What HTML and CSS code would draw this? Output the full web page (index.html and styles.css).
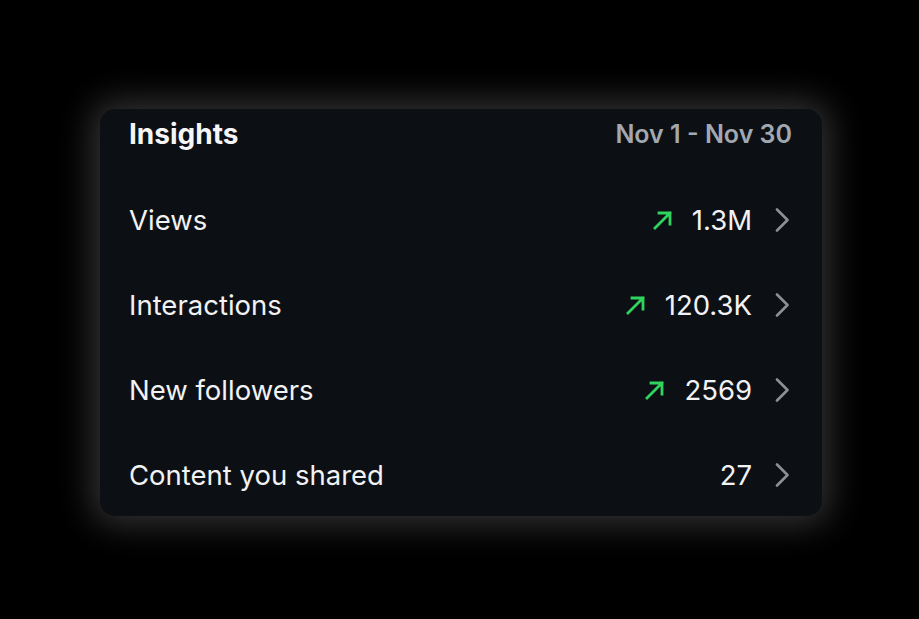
FILE: index.html
```
<!DOCTYPE html>
<html>
<head>
<meta charset="utf-8">
<link rel="stylesheet" href="styles.css">
</head>
<body>
<div class="card">
  <div class="header">
    <span class="title">Insights</span>
    <span class="date">Nov 1 - Nov 30</span>
  </div>
  <div class="row">
    <span class="label">Views</span>
    <span class="right">
      <svg class="arrow" viewBox="0 0 20 20"><path d="M2 18 L17 3 M6 3 H17 V14"/></svg>
      <span class="value">1.3M</span>
      <svg class="chev" viewBox="0 0 14 24"><path d="M2 1.5 L12.5 12 L2 22.5"/></svg>
    </span>
  </div>
  <div class="row">
    <span class="label">Interactions</span>
    <span class="right">
      <svg class="arrow" viewBox="0 0 20 20"><path d="M2 18 L17 3 M6 3 H17 V14"/></svg>
      <span class="value">120.3K</span>
      <svg class="chev" viewBox="0 0 14 24"><path d="M2 1.5 L12.5 12 L2 22.5"/></svg>
    </span>
  </div>
  <div class="row">
    <span class="label">New followers</span>
    <span class="right">
      <svg class="arrow" viewBox="0 0 20 20"><path d="M2 18 L17 3 M6 3 H17 V14"/></svg>
      <span class="value">2569</span>
      <svg class="chev" viewBox="0 0 14 24"><path d="M2 1.5 L12.5 12 L2 22.5"/></svg>
    </span>
  </div>
  <div class="row">
    <span class="label">Content you shared</span>
    <span class="right">
      <span class="value">27</span>
      <svg class="chev" viewBox="0 0 14 24"><path d="M2 1.5 L12.5 12 L2 22.5"/></svg>
    </span>
  </div>
</div>
</body>
</html>
```
FILE: styles.css
```
html, body {
  margin: 0;
  background: #000;
}
body {
  width: 919px;
  height: 619px;
  box-sizing: border-box;
  padding: 109px 0 0 100px;
  font-family: Inter, "Noto Sans", sans-serif;
  overflow: hidden;
}
.card {
  width: 722px;
  height: 407px;
  box-sizing: border-box;
  background: #0c1014;
  border-radius: 15px;
  box-shadow: 0 0 34px 8px rgba(85, 85, 85, 0.6);
  padding: 0 33px 0 29px;
  display: flex;
  flex-direction: column;
}
.header {
  height: 68px;
  flex: none;
  display: flex;
  justify-content: space-between;
  align-items: flex-start;
  padding-top: 8px;
  box-sizing: border-box;
  line-height: 34px;
}
.title {
  color: #f5f5f7;
  font-size: 28px;
  font-weight: 700;
}
.date {
  color: #a2a8b1;
  font-size: 25px;
  font-weight: 600;
  margin-right: -3px;
}
.row {
  height: 85px;
  flex: none;
  display: flex;
  align-items: center;
  justify-content: space-between;
}
.label {
  color: #f2f2f4;
  font-size: 27.5px;
  font-weight: 400;
}
.right {
  display: flex;
  align-items: center;
}
.arrow {
  width: 20px;
  height: 20px;
  margin-right: 19px;
  fill: none;
  stroke: #2fd35e;
  stroke-width: 2.8;
  stroke-linecap: square;
}
.value {
  color: #f2f2f4;
  font-size: 27.5px;
  font-weight: 400;
}
.chev {
  width: 14px;
  height: 24px;
  margin-left: 23px;
  fill: none;
  stroke: #8e8f94;
  stroke-width: 2.6;
  stroke-linecap: round;
  stroke-linejoin: round;
}
```
